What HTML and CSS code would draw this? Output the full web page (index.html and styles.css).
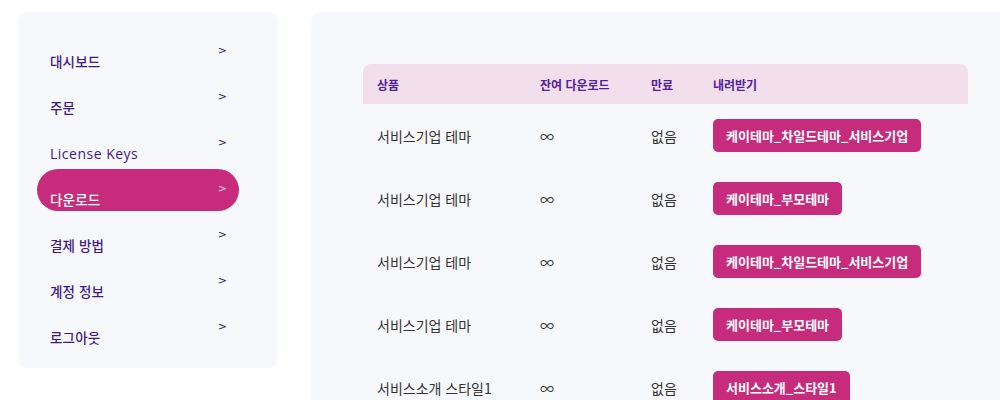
FILE: index.html
```html
<!DOCTYPE html>
<html lang="ko">
<head>
<meta charset="utf-8">
<link rel="stylesheet" href="styles.css">
</head>
<body>
<div class="page">
  <nav class="sidebar">
    <a class="item"><span class="label">대시보드</span><span class="arrow">&gt;</span></a>
    <a class="item"><span class="label">주문</span><span class="arrow">&gt;</span></a>
    <a class="item"><span class="label latin">License Keys</span><span class="arrow">&gt;</span></a>
    <a class="item active"><span class="label">다운로드</span><span class="arrow">&gt;</span></a>
    <a class="item"><span class="label">결제 방법</span><span class="arrow">&gt;</span></a>
    <a class="item"><span class="label">계정 정보</span><span class="arrow">&gt;</span></a>
    <a class="item"><span class="label">로그아웃</span><span class="arrow">&gt;</span></a>
  </nav>
  <main class="content">
    <table class="downloads">
      <thead>
        <tr><th class="c1">상품</th><th class="c2">잔여 다운로드</th><th class="c3">만료</th><th class="c4">내려받기</th></tr>
      </thead>
      <tbody>
        <tr><td>서비스기업 테마</td><td>∞</td><td>없음</td><td><a class="btn">케이테마_차일드테마_서비스기업</a></td></tr>
        <tr><td>서비스기업 테마</td><td>∞</td><td>없음</td><td><a class="btn">케이테마_부모테마</a></td></tr>
        <tr><td>서비스기업 테마</td><td>∞</td><td>없음</td><td><a class="btn">케이테마_차일드테마_서비스기업</a></td></tr>
        <tr><td>서비스기업 테마</td><td>∞</td><td>없음</td><td><a class="btn">케이테마_부모테마</a></td></tr>
        <tr><td>서비스소개 스타일1</td><td>∞</td><td>없음</td><td><a class="btn">서비스소개_스타일1</a></td></tr>
      </tbody>
    </table>
  </main>
</div>
</body>
</html>
```

FILE: styles.css
```css
html, body {
  margin: 0;
  padding: 0;
  background: #ffffff;
  overflow: hidden;
}
body {
  width: 1000px;
  height: 400px;
  font-family: "Open Sans", "Noto Sans CJK KR", sans-serif;
}
.page {
  display: flex;
  align-items: flex-start;
  gap: 33px;
  padding: 12px 0 0 18px;
  width: 1100px;
}
.sidebar {
  width: 260px;
  box-sizing: border-box;
  background: #f7f8fb;
  border-radius: 9px;
  padding: 19px 39px 19px 19px;
  display: flex;
  flex-direction: column;
  gap: 4px;
}
.item {
  height: 42px;
  border-radius: 21px;
  display: flex;
  justify-content: space-between;
  align-items: flex-start;
  padding: 0 12px 0 13px;
  color: #3f1a86;
  font-size: 13.5px;
  font-weight: 500;
}
.item .label {
  padding-top: 22px;
  line-height: 18px;
  letter-spacing: 0.2px;
  white-space: nowrap;
}
.item .label.latin {
  font-size: 14px;
  font-weight: 500;
  letter-spacing: 0.5px;
}
.item .arrow {
  padding-top: 13px;
  line-height: 14px;
  font-size: 11px;
  font-weight: 400;
  color: #2d2250;
  font-family: "DejaVu Sans", sans-serif;
}
.item.active {
  background: #c72c7c;
  color: #ffffff;
}
.item.active .arrow {
  color: #f3d5e6;
}
.content {
  width: 720px;
  height: 420px;
  box-sizing: border-box;
  background: #f7f8fb;
  border-radius: 9px;
  padding: 52px;
}
.downloads {
  width: 605px;
  border-collapse: collapse;
  table-layout: fixed;
  font-family: "Noto Sans CJK KR", "Noto Sans", sans-serif;
}
.downloads th {
  background: #f3dfeb;
  height: 40px;
  padding: 0;
  text-align: left;
  font-size: 12px;
  font-weight: 700;
  color: #5120a0;
}
.downloads th.c1 { width: 163px; padding-left: 14px; border-top-left-radius: 8px; }
.downloads th.c2 { width: 111px; }
.downloads th.c3 { width: 62px; }
.downloads th.c4 { border-top-right-radius: 8px; }
.downloads td {
  height: 63px;
  padding: 0;
  font-size: 14px;
  color: #333333;
  vertical-align: middle;
  white-space: nowrap;
}
.downloads td:first-child { padding-left: 14px; }
.btn {
  display: inline-block;
  background: #c72c7c;
  color: #ffffff;
  font-size: 13px;
  font-weight: 700;
  line-height: 33px;
  height: 33px;
  padding: 0 13px;
  border-radius: 5px;
  white-space: nowrap;
}
```
